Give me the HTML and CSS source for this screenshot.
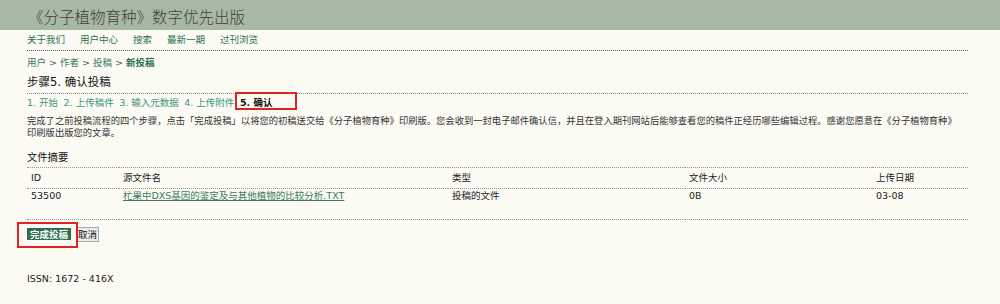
FILE: index.html
```html
<!DOCTYPE html>
<html lang="zh">
<head>
<meta charset="utf-8">
<title>确认投稿</title>
<link rel="stylesheet" href="styles.css">
</head>
<body>
<header class="masthead">
  <h1 class="site-title">《分子植物育种》数字优先出版</h1>
</header>
<div class="main">
  <nav class="navbar">
    <a href="#">关于我们</a>
    <a href="#">用户中心</a>
    <a href="#">搜索</a>
    <a href="#">最新一期</a>
    <a href="#">过刊浏览</a>
  </nav>
  <div class="breadcrumb">
    <a href="#">用户</a> &gt; <a href="#">作者</a> &gt; <a href="#">投稿</a> &gt; <a href="#" class="current-crumb">新投稿</a>
  </div>
  <h2 class="page-heading">步骤5. 确认投稿</h2>
  <div class="steps">
    <a href="#">1. 开始</a>
    <a href="#">2. 上传稿件</a>
    <a href="#">3. 输入元数据</a>
    <a href="#">4. 上传附件</a>
    <span class="step-current">5. 确认</span>
  </div>
  <p class="intro">完成了之前投稿流程的四个步骤，点击「完成投稿」以将您的初稿送交给《分子植物育种》印刷版。您会收到一封电子邮件确认信，并且在登入期刊网站后能够查看您的稿件正经历哪些编辑过程。感谢您愿意在《分子植物育种》印刷版出版您的文章。</p>
  <h3 class="section-title">文件摘要</h3>
  <table class="files">
    <thead>
      <tr>
        <th class="c-id">ID</th>
        <th class="c-name">源文件名</th>
        <th class="c-type">类型</th>
        <th class="c-size">文件大小</th>
        <th class="c-date">上传日期</th>
      </tr>
    </thead>
    <tbody>
      <tr>
        <td>53500</td>
        <td><a href="#">杧果中DXS基因的鉴定及与其他植物的比较分析.TXT</a></td>
        <td>投稿的文件</td>
        <td>0B</td>
        <td>03-08</td>
      </tr>
    </tbody>
  </table>
  <div class="actions">
    <span class="btn-wrap"><button class="btn-primary" type="button">完成投稿</button></span><button class="btn-cancel" type="button">取消</button>
  </div>
  <div class="issn">ISSN: 1672 - 416X</div>
</div>
</body>
</html>
```

FILE: styles.css
```css
html, body {
  margin: 0;
  padding: 0;
}
body {
  background: #fbfbf4;
  font-family: "DejaVu Sans", "Noto Sans CJK SC", sans-serif;
  font-size: 9.5px;
  line-height: 12px;
  color: #222;
}
a {
  color: #2f6e4c;
  text-decoration: none;
}
.masthead {
  background: #a7b9a5;
  height: 30px;
  padding-left: 28px;
}
.site-title {
  margin: 0;
  font-family: "Noto Sans CJK SC", sans-serif;
  font-weight: 300;
  font-size: 15.5px;
  line-height: 32px;
  color: #3e3e3b;
}
.main {
  padding: 0 32px 0 27px;
}
.navbar {
  display: flex;
  gap: 15px;
  padding: 4px 0 4px;
  border-bottom: 1px dotted #555;
}
.navbar a {
  color: #2f7050;
}
.breadcrumb {
  margin-top: 6px;
  color: #555;
}
.breadcrumb a {
  color: #3b7a5c;
}
.breadcrumb .current-crumb {
  font-weight: bold;
  color: #2f6e4c;
}
.page-heading {
  margin: 5px 0 0;
  font-size: 11.5px;
  font-weight: normal;
  line-height: 16px;
  padding-bottom: 3px;
  border-bottom: 1px dotted #888;
  color: #111;
}
.steps {
  padding-top: 3px;
  display: flex;
  gap: 5.5px;
}
.steps a {
  color: #3f9579;
}
.step-current {
  position: relative;
  font-weight: bold;
  color: #111;
}
.step-current::after {
  content: "";
  position: absolute;
  left: -5px;
  right: -25px;
  top: -5px;
  bottom: -1px;
  border: 2px solid #e32323;
}
.intro {
  margin: 6px 0 0;
  padding-right: 10px;
  font-size: 9.3px;
  color: #333;
}
.section-title {
  margin: 11px 0 0;
  font-size: 10.3px;
  font-weight: normal;
  line-height: 14px;
  color: #111;
}
.files {
  margin-top: 3px;
  width: 100%;
  border-collapse: collapse;
  color: #222;
}
.files th {
  font-weight: normal;
  text-align: left;
  padding: 4px 0 4px 4px;
  border-top: 1px dotted #999;
  border-bottom: 1px dotted #999;
}
.files td {
  padding: 1px 0 17px 4px;
  border-bottom: 1px dotted #999;
  vertical-align: top;
}
.files th.c-id { width: 88px; }
.files th.c-name { width: 325px; }
.files th.c-type { width: 233px; }
.files th.c-size { width: 183px; }
.files td a {
  color: #3b7a5c;
  text-decoration: underline;
}
.actions {
  margin-top: 6px;
  display: flex;
  align-items: center;
}
.btn-wrap {
  position: relative;
  display: inline-flex;
}
.btn-wrap::after {
  content: "";
  position: absolute;
  left: -10px;
  right: -7px;
  top: -6px;
  bottom: -8px;
  border: 2px solid #e32323;
}
.btn-primary {
  font-family: "DejaVu Sans", "Noto Sans CJK SC", sans-serif;
  font-size: 9.5px;
  line-height: 11px;
  font-weight: bold;
  color: #fff;
  background: #2e6e4f;
  border: 0;
  padding: 1px 3px 0;
  margin: 0;
  cursor: pointer;
}
.btn-cancel {
  font-family: "DejaVu Sans", "Noto Sans CJK SC", sans-serif;
  font-size: 9.5px;
  line-height: 12px;
  color: #111;
  background: #ececec;
  border: 1px solid #aaa;
  padding: 1px 1px 0;
  margin: 1px 0 0 5px;
}
.issn {
  margin-top: 31px;
  color: #222;
}
```
